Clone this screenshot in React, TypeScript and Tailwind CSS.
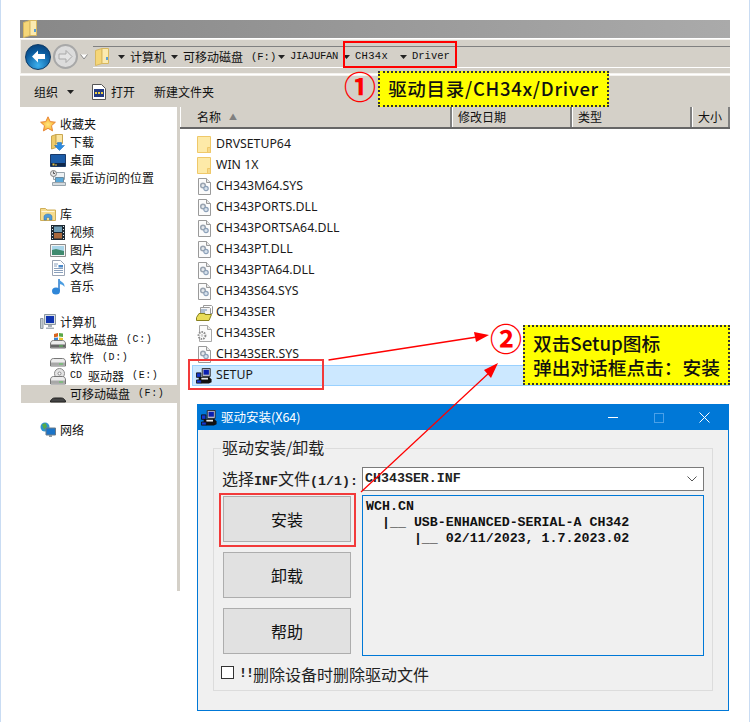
import React from "react";

const cjk = "font-[family-name:'Noto_Sans_CJK_SC',sans-serif]";
const mono = "font-[family-name:'Liberation_Mono',monospace]";

function PlainFolder() {
  return (
    <svg width="14" height="17" viewBox="0 0 14 17" className="shrink-0">
      <path d="M.5.500h13v16H.5z" fill="#fdeaa8" stroke="#efc869" />
      <path d="M10.500 11.500h3v5h-3z" fill="#f7d988" stroke="#efc869" />
    </svg>
  );
}
function BigFolder() {
  return (
    <svg width="14" height="18" viewBox="0 0 14 18" className="shrink-0">
      <path d="M.5 2.500 7 .5v15l-6.500 2z" fill="#f5d678" stroke="#d8b860" />
      <path d="M7 .5h6.500v15H7z" fill="#fbeab0" stroke="#d8b860" />
      <path d="M11 9h2v3h-2z" fill="#5aa0d8" />
    </svg>
  );
}
function DocGear() {
  return (
    <svg width="13" height="17" viewBox="0 0 13 17" className="shrink-0">
      <path d="M.5.500h8l4 4v12H.5z" fill="#fbfbfb" stroke="#9a9a9a" />
      <path d="M8.500.500v4h4" fill="#e8e8e8" stroke="#9a9a9a" />
      <circle cx="5" cy="7.500" r="2.300" fill="#e4e8ec" stroke="#9aa4b0" strokeWidth="1.500" />
      <circle cx="8" cy="10.500" r="2.200" fill="#d8e2ec" stroke="#8ca0b8" strokeWidth="1.200" />
    </svg>
  );
}
function DocCog() {
  return (
    <svg width="15" height="17" viewBox="0 0 15 17" className="shrink-0">
      <path d="M2.500.500h8l4 4v12h-12z" fill="#fbfbfb" stroke="#a8a8a8" />
      <path d="M10.500.500v4h4" fill="#e8e8e8" stroke="#a8a8a8" />
      <circle cx="5" cy="10.500" r="3.400" fill="#fff" stroke="#8e8e8e" strokeWidth="2" strokeDasharray="1.600 .9" />
      <circle cx="5" cy="10.500" r="1.400" fill="#cfcfcf" />
    </svg>
  );
}
function InfIcon() {
  return (
    <svg width="17" height="16" viewBox="0 0 17 16" className="shrink-0">
      <path d="M7.500.500h8l1 1v7h-9z" fill="#fff" stroke="#999" />
      <path d="M4.500 2.500h9l1 1v6h-10z" fill="#f4f4f4" stroke="#999" />
      <path d="M3 8.500h6v1h6.500L13 15.500H.5v-3z" fill="#e9dc58" stroke="#87801e" />
      <path d="M5 5h6M5 7h4" stroke="#6a8ab0" />
    </svg>
  );
}
function SetupIcon({ size = 16 }: { size?: number }) {
  return (
    <svg width={size} height={size} viewBox="0 0 18 18" className="shrink-0">
      <path d="M7 .5h9v9H7z" fill="#c0c0d0" stroke="#222" />
      <path d="M8.500 2h6v5.500h-6z" fill="#0a1fb0" />
      <path d="M.5 5.500h5v5h-5z" fill="#1538d0" stroke="#111" />
      <path d="M3 10h12l2.500 3v3l-3 1.500H6L3 14z" fill="#111" />
      <path d="M6 11h7.500v2H6z" fill="#e8e8e8" />
      <path d="M.5 13.500h5.500v3.500H.5z" fill="#1538d0" stroke="#111" />
    </svg>
  );
}
function Star() {
  return (
    <svg width="16" height="16" viewBox="0 0 16 16" className="shrink-0">
      <defs>
        <radialGradient id="st" cx=".5" cy=".55" r=".55">
          <stop offset="0" stopColor="#ffe680" />
          <stop offset="1" stopColor="#f8a820" />
        </radialGradient>
      </defs>
      <path d="M8 .800 10.200 5.600 15.400 6.200 11.500 9.700 12.600 14.900 8 12.300 3.400 14.900 4.500 9.700.600 6.200 5.800 5.600z" fill="url(#st)" stroke="#e8873a" />
    </svg>
  );
}
function DownloadIcon() {
  return (
    <svg width="14" height="17" viewBox="0 0 14 17" className="shrink-0">
      <path d="M.5 2 5 .5v13L.5 15z" fill="#efcb68" stroke="#c9a650" />
      <path d="M5 .5h6.500v9H5z" fill="#fbe6a4" stroke="#c9a650" />
      <path d="M6.500 8.500h4v3h3l-5 5-5-5h3z" fill="#2a8be0" stroke="#1a68b8" strokeWidth=".5" />
    </svg>
  );
}
function DesktopIcon() {
  return (
    <svg width="16" height="13" viewBox="0 0 16 13" className="shrink-0">
      <path d="M.5.500h15v12H.5z" fill="#1c5ca8" stroke="#1b3a68" />
      <path d="M1 9h14v3H1z" fill="#10284a" />
      <path d="M2.500 9.500h2v2h-2zM5 10.500h2v1H5z" fill="#e8c040" />
    </svg>
  );
}
function RecentIcon() {
  return (
    <svg width="16" height="16" viewBox="0 0 16 16" className="shrink-0">
      <path d="M3.500 2.500h11v7h-11z" fill="#eef2f4" stroke="#98a4ac" />
      <path d="M5.500 7.500h8v5h-8z" fill="#5aa8d8" stroke="#6a8aa0" />
      <circle cx="3.500" cy="3.500" r="3" fill="#e4e4e4" stroke="#808080" />
      <path d="M3.500 1.500v2h1.500" fill="none" stroke="#555" />
      <path d="M2.500 12.500h13v3h-13z" fill="#d4dade" stroke="#98a4ac" />
    </svg>
  );
}
function LibIcon() {
  return (
    <svg width="16" height="14" viewBox="0 0 16 14" className="shrink-0">
      <path d="M.5 1.500h5l1.500 1.500h8.500v10.500H.5z" fill="#f6dc8e" stroke="#cfae58" />
      <path d="M1.500 4.500h13" stroke="#fff6d8" />
      <path d="M4 13V9.500C4 8 6 7 8 7s4 1 4 2.500V13h-2.500v-2.500h-3V13z" fill="#4f9ad8" stroke="#2a6ea8" strokeWidth=".5" />
    </svg>
  );
}
function VideoIcon() {
  return (
    <svg width="14" height="15" viewBox="0 0 14 15" className="shrink-0">
      <path d="M0 0h14v15H0z" fill="#1e2a33" />
      <path d="M3 1.500h8v5.500H3z" fill="#6f9db4" />
      <path d="M3 8h8v5.500H3z" fill="#a8683c" />
      <path d="M1 1h1v1H1zM1 4h1v1H1zM1 7h1v1H1zM1 10h1v1H1zM1 13h1v1H1zM12 1h1v1h-1zM12 4h1v1h-1zM12 7h1v1h-1zM12 10h1v1h-1zM12 13h1v1h-1z" fill="#dfeef6" />
    </svg>
  );
}
function PictureIcon() {
  return (
    <svg width="16" height="13" viewBox="0 0 16 13" className="shrink-0">
      <path d="M.5.500h15v12H.5z" fill="#f4f4f4" stroke="#8c8c8c" />
      <path d="M2 2h12v5H2z" fill="#a8d4e8" />
      <path d="M2 6l4-1 8 2v4H2z" fill="#3f8a6e" />
    </svg>
  );
}
function DocTextIcon() {
  return (
    <svg width="13" height="16" viewBox="0 0 13 16" className="shrink-0">
      <path d="M.5.500h8l4 4v11H.5z" fill="#fff" stroke="#9aa4b4" />
      <path d="M2 4h4M2 6h3M2 8.500h9M2 10.500h9M2 12.500h9" stroke="#8aa0bc" />
      <path d="M6.500 5h4.500v2.500H6.500z" fill="#4a88c8" />
    </svg>
  );
}
function MusicIcon() {
  return (
    <svg width="13" height="17" viewBox="0 0 13 17" className="shrink-0">
      <path d="M7 1v12" stroke="#2a78c8" strokeWidth="1.500" />
      <ellipse cx="4" cy="13" rx="4" ry="3.500" fill="#2f86d8" />
      <path d="M7 1c1 3 6 3 5.500 8-1-2-3.500-3-5.500-3z" fill="#4a9ce0" />
    </svg>
  );
}
function ComputerIcon() {
  return (
    <svg width="16" height="16" viewBox="0 0 16 16" className="shrink-0">
      <path d="M4.500.500h11v10h-11z" fill="#d8dfe4" stroke="#8c98a0" />
      <path d="M6 2h8v7H6z" fill="#1034b0" />
      <path d="M.5 4.500h2.500v10H.5z" fill="#c4ccd2" stroke="#8c98a0" />
      <path d="M8 11h4v2H8zM6 13.500h8v1.500H6z" fill="#a8b0b8" />
    </svg>
  );
}
function DriveIcon({ kind }: { kind: "win" | "plain" | "cd" | "usb" }) {
  return (
    <svg width="16" height="17" viewBox="0 0 16 17" className="shrink-0">
      {kind === "win" && <path d="M4 2l4-1v3.500L4 5.500z" fill="#d8641e" />}
      {kind === "win" && <path d="M9 1l4 .5V5L9 4.500z" fill="#5aa848" />}
      {kind === "win" && <path d="M4 6l4-.5V8.500H4z" fill="#3a84d0" />}
      {kind === "win" && <path d="M9 5.500l4 .5v2.500H9z" fill="#e8c030" />}
      {kind === "cd" && <circle cx="9.500" cy="5.500" r="5" fill="#e4e4e4" stroke="#8a8a8a" />}
      {kind === "cd" && <circle cx="9.500" cy="5.500" r="1.500" fill="#fff" stroke="#8a8a8a" />}
      {kind === "usb" ? (
        <path d="M.5 16v-1C1.500 13 3 12 4.500 12h7c1.500 0 3 1 4 3v1z" fill="#444" stroke="#222" />
      ) : (
        <>
          <path d="M.5 12c0-2 1-3.500 3-3.500h9c2 0 3 1.500 3 3.500v4H.5z" fill="#ececec" stroke="#777" />
          <path d="M1 12.500h14v3H1z" fill={kind === "win" ? "#666" : "#a8a8a8"} />
          <path d="M9 13.500h4v1H9z" fill="#5ac85a" />
        </>
      )}
    </svg>
  );
}
function NetworkIcon() {
  return (
    <svg width="16" height="16" viewBox="0 0 16 16" className="shrink-0">
      <circle cx="5" cy="5" r="4.500" fill="#2f93cf" />
      <path d="M2 2.500l3.500-1.500L7 4.500 4 7.500z" fill="#56ac48" />
      <path d="M6 6h9.500v7H6z" fill="#1b74c8" stroke="#6a7a88" />
      <path d="M9 13h3v2H9z" fill="#8c98a0" />
    </svg>
  );
}

function SideRow({ icon, label, top = false, active = false, tail }: { icon: React.ReactNode; label: React.ReactNode; top?: boolean; active?: boolean; tail?: string }) {
  const pad = active ? "ml-[1px] bg-[#d4d0c8] pl-[29px]" : top ? "pl-5" : "pl-[30px]";
  return (
    <div className={`flex h-[18px] items-center ${pad}`}>
      <span className="flex w-4 justify-center">{icon}</span>
      <span className={`ml-1 flex items-center whitespace-pre text-xs leading-[18px] text-[#111] ${cjk}`}>
        {label}
        {tail && <span className={`ml-[8px] ${mono} text-[10px] tracking-[0.6px]`}>{tail}</span>}
      </span>
    </div>
  );
}

function FileRow({ icon, name, selected = false }: { icon: React.ReactNode; name: string; selected?: boolean }) {
  return (
    <div className={`flex h-[21px] items-center ${selected ? "ml-[12px] border border-[#99d1ff] bg-[#cce8ff] pl-[2px]" : "pl-[15px]"}`}>
      <span className="flex w-[18px] justify-center">{icon}</span>
      <span className="ml-[3px] font-[family-name:'Noto_Sans',sans-serif] text-[12.3px] text-[#1a1a1a]">{name}</span>
    </div>
  );
}

function HeaderCell({ label, w, sort = false }: { label: string; w: string; sort?: boolean }) {
  return (
    <div className={`flex items-center gap-2 border-r-2 border-r-[#808080] border-l border-l-white px-[5px] text-xs text-[#111] ${cjk} ${w}`}>
      {label}
      {sort && <span className="text-[8px] text-[#808080]">▲</span>}
    </div>
  );
}

function Arrow() {
  return (
    <svg width="7" height="4" viewBox="0 0 7 4" className="mr-[5px]">
      <path d="M0 0h7L3.500 4z" fill="#222" />
    </svg>
  );
}

function Crumb({ children, track, w }: { children: React.ReactNode; track: string; w: string }) {
  return (
    <span className={`flex items-center whitespace-pre ${w}`}>
      <Arrow />
      <span className={`${mono} text-[10.5px] ${track}`}>{children}</span>
    </span>
  );
}

function DlgButton({ label }: { label: string }) {
  return (
    <button className={`h-[46px] w-[128px] border border-[#adadad] bg-[#e1e1e1] text-base text-[#111] ${cjk}`}>{label}</button>
  );
}

function Dialog() {
  return (
    <div className="absolute left-[196px] top-[404px] flex h-[307px] w-[532px] flex-col border border-[#0078d7] bg-[#f0f0f0]">
      <div className="flex h-[25px] shrink-0 items-center bg-[#0078d7] pl-[3px] text-white">
        <SetupIcon size={16} />
        <span className={`ml-[4px] text-[12.5px] ${cjk}`}>驱动安装(X64)</span>
        <span className="ml-auto mr-[36px] h-[1px] w-[10px] bg-white" />
        <span className="mr-[35px] h-[10px] w-[10px] border border-[#4aa0e8]" />
        <svg width="11" height="11" viewBox="0 0 11 11" className="mr-[18px]">
          <path d="M.5.500l10 10M10.500.500l-10 10" stroke="#fff" />
        </svg>
      </div>
      <div className="mx-[15px] mt-[18px] flex h-[243px] flex-col border border-[#dcdcdc] px-[8px]">
        <span className={`-mt-[14px] ml-[-1px] w-fit bg-[#f0f0f0] px-[1px] text-base leading-[24px] text-[#222] ${cjk}`}>驱动安装/卸载</span>
        <div className="mt-[8px] flex h-[24px] items-center">
          <span className={`w-[140px] shrink-0 whitespace-pre text-base text-[#222] ${cjk}`}>
            选择<span className={`${mono} text-[13.3px] font-bold`}>INF</span>文件<span className={`${mono} text-[13.3px] font-bold`}>(1/1):</span>
          </span>
          <div className={`flex h-[24px] w-[342px] items-center justify-between border border-[#7a7a7a] bg-white pl-[2px] pr-[6px] ${mono} text-[13.3px] font-bold text-[#222]`}>
            CH343SER.INF
            <svg width="10" height="6" viewBox="0 0 10 6"><path d="M.5.500 5 5 9.500.500" fill="none" stroke="#555" /></svg>
          </div>
        </div>
        <div className="mt-[4px] flex">
          <div className="ml-[1px] mr-[11px] flex flex-col gap-[10px] pt-[1px]">
            <DlgButton label="安装" />
            <DlgButton label="卸载" />
            <DlgButton label="帮助" />
          </div>
          <div className={`h-[161px] w-[342px] whitespace-pre border border-[#0078d7] bg-[#f0f0f0] px-[3px] pt-[3px] ${mono} text-[13.3px] font-bold leading-[16px] text-[#111]`}>
            {"WCH.CN\n  |__ USB-ENHANCED-SERIAL-A CH342\n      |__ 02/11/2023, 1.7.2023.02"}
          </div>
        </div>
        <div className="mt-[9px] flex h-[15px] items-center">
          <span className="-ml-[1px] h-[13px] w-[13px] border border-[#333] bg-white" />
          <span className={`ml-[5px] flex items-center whitespace-pre pt-[2px] text-base text-[#222] ${cjk}`}>
            <span className={`${mono} w-[14px] text-[13.3px] font-bold tracking-[-1px]`}>!!</span>删除设备时删除驱动文件
          </span>
        </div>
      </div>
    </div>
  );
}

export default function App() {
  return (
    <div className="relative h-[722px] w-[750px] overflow-hidden border-x border-x-[#c9dcf3] bg-white">
      <div className="ml-[19px] w-[710px] pt-5">
        <div className="flex h-[18px] items-center bg-gradient-to-r from-[#888888] to-[#aaaaaa] pl-[3px]">
          <BigFolder />
        </div>
        <div className="mt-[1px] flex h-[35px] items-center border-y border-y-[#f4f2ee] border-l border-l-[#f4f2ee] bg-[#d4d0c8]">
          <span className="ml-[4px] flex h-[26px] w-[26px] items-center justify-center rounded-full border border-[#0c3a66] bg-[radial-gradient(circle_at_50%_85%,#3cb0ee,#0a5a9c_60%,#083a70)]">
            <svg width="15" height="13" viewBox="0 0 15 13"><path d="M7 .500 1 6.500l6 6V9h7V4H7z" fill="#fff" /></svg>
          </span>
          <span className="ml-[2px] flex h-[25px] w-[25px] items-center justify-center rounded-full border-2 border-[#a8a8a8] bg-[#dcdcdc]">
            <svg width="15" height="13" viewBox="0 0 15 13"><path d="M8 .500l6 6-6 6V9H1V4h7z" fill="#e4e4e4" stroke="#a8a8a8" /></svg>
          </span>
          <svg width="8" height="6" viewBox="0 0 8 6" className="ml-[2px]"><path d="M.5.500 4 5 7.500.500" fill="#fff" stroke="#888" /></svg>
          <div className="ml-[5px] flex h-[22px] flex-1 items-center border-y border-y-[#808080] border-b-white pl-[2px] text-[#111]">
            <BigFolder />
            <span className="w-[9px]" />
            <span className={`flex w-[53px] items-center ${cjk} text-xs`}><Arrow />计算机</span>
            <span className={`flex w-[107px] items-center whitespace-pre ${cjk} text-xs`}>
              <Arrow />可移动磁盘<span className={`ml-[8px] ${mono} text-[10.5px]`}>(F:)</span>
            </span>
            <Crumb w="w-[65px]" track="tracking-[-0.3px]">JIAJUFAN</Crumb>
            <Crumb w="w-[57px]" track="tracking-[0.3px]">CH34x</Crumb>
            <Crumb w="w-[50px]" track="tracking-[0px]">Driver</Crumb>
          </div>
        </div>
        <div className={`mt-[1px] flex h-[32px] items-center border-t border-t-[#f4f2ee] bg-[#d4d0c8] pl-[14px] text-xs text-[#111] ${cjk}`}>
          <span>组织</span>
          <span className="ml-[9px]"><svg width="7" height="4" viewBox="0 0 7 4" className="block"><path d="M0 0h7L3.500 4z" fill="#222" /></svg></span>
          <span className="ml-[18px]"><svg width="14" height="16" viewBox="0 0 14 16" className="block"><path d="M.5.500h9l4 4v11H.5z" fill="#fff" stroke="#555" /><path d="M2 5h10v8H2z" fill="#223a80" /><path d="M3 8h2v2H3zM6 8h2v2H6zM9 8h2v2H9z" fill="#f0d040" /></svg></span>
          <span className="ml-[5px]">打开</span>
          <span className="ml-[19px]">新建文件夹</span>
        </div>
        <div className="flex h-[484px]">
          <div className="w-[157px] pt-[8px]">
            <div className="flex flex-col gap-[18px]">
              <div>
                <SideRow top icon={<Star />} label="收藏夹" />
                <SideRow icon={<DownloadIcon />} label="下载" />
                <SideRow icon={<DesktopIcon />} label="桌面" />
                <SideRow icon={<RecentIcon />} label="最近访问的位置" />
              </div>
              <div>
                <SideRow top icon={<LibIcon />} label="库" />
                <SideRow icon={<VideoIcon />} label="视频" />
                <SideRow icon={<PictureIcon />} label="图片" />
                <SideRow icon={<DocTextIcon />} label="文档" />
                <SideRow icon={<MusicIcon />} label="音乐" />
              </div>
              <div>
                <SideRow top icon={<ComputerIcon />} label="计算机" />
                <SideRow icon={<DriveIcon kind="win" />} label="本地磁盘" tail="(C:)" />
                <SideRow icon={<DriveIcon kind="plain" />} label="软件" tail="(D:)" />
                <SideRow icon={<DriveIcon kind="cd" />} label={<><span className={`${mono} mr-[6px] text-[10px]`}>CD</span>驱动器</>} tail="(E:)" />
                <SideRow active icon={<DriveIcon kind="usb" />} label="可移动磁盘" tail="(F:)" />
              </div>
              <SideRow top icon={<NetworkIcon />} label="网络" />
            </div>
          </div>
          <div className="w-[3px] bg-[#d4d0c8]" />
          <div className="flex-1">
            <div className="flex h-[22px] border-b-2 border-b-[#666] bg-[#d4d0c8]">
              <HeaderCell label="名称" w="w-[272px] pl-[16px]" sort />
              <HeaderCell label="修改日期" w="w-[120px]" />
              <HeaderCell label="类型" w="w-[120px]" />
              <HeaderCell label="大小" w="flex-1 border-r-0" />
            </div>
            <div className="flex flex-col pt-[5px]">
              <FileRow icon={<PlainFolder />} name="DRVSETUP64" />
              <FileRow icon={<PlainFolder />} name="WIN 1X" />
              <FileRow icon={<DocGear />} name="CH343M64.SYS" />
              <FileRow icon={<DocGear />} name="CH343PORTS.DLL" />
              <FileRow icon={<DocGear />} name="CH343PORTSA64.DLL" />
              <FileRow icon={<DocGear />} name="CH343PT.DLL" />
              <FileRow icon={<DocGear />} name="CH343PTA64.DLL" />
              <FileRow icon={<DocGear />} name="CH343S64.SYS" />
              <FileRow icon={<InfIcon />} name="CH343SER" />
              <FileRow icon={<DocCog />} name="CH343SER" />
              <FileRow icon={<DocGear />} name="CH343SER.SYS" />
              <FileRow selected icon={<SetupIcon />} name="SETUP" />
            </div>
          </div>
        </div>
      </div>

      <Dialog />

      <div className="absolute left-[342px] top-[41px] h-[27px] w-[114px] border-2 border-[#ff0000]" />
      <div className={`absolute left-[343px] top-[65px] text-[32px] font-bold leading-[40px] text-[#ff0000] ${cjk}`}>①</div>
      <div className={`absolute left-[377px] top-[71px] flex h-[36px] w-[231px] items-center justify-center border-2 border-dotted border-[#333] bg-[#ffff00] text-[18.5px] font-medium tracking-[0.7px] text-[#111] ${cjk}`}>
        驱动目录/CH34x/Driver
      </div>

      <div className="absolute left-[187px] top-[359px] h-[31px] w-[136px] border-2 border-[#f23a3a]" />
      <div className="absolute left-[218px] top-[493px] h-[54px] w-[137px] border-2 border-[#f23a3a]" />

      <svg className="absolute left-0 top-0" width="750" height="722" viewBox="0 0 750 722">
        <path d="M327.500 360 476 337" stroke="#ff0000" strokeWidth="1.500" />
        <path d="M488 335 473 332 475 342z" fill="#ff0000" />
        <path d="M360 492 489 372" stroke="#ff0000" strokeWidth="1.200" />
        <path d="M497 363 483 370 490 378z" fill="#ff0000" />
      </svg>

      <div className={`absolute left-[489px] top-[317px] text-[32px] font-bold leading-[40px] text-[#ff0000] ${cjk}`}>②</div>
      <div className={`absolute left-[522px] top-[325px] flex h-[60px] w-[207px] flex-col justify-center border-2 border-dotted border-[#333] bg-[#ffff00] pl-[8px] text-[18.7px] font-medium leading-[24px] text-[#111] ${cjk}`}>
        <span>双击Setup图标</span>
        <span>弹出对话框点击：安装</span>
      </div>
    </div>
  );
}
